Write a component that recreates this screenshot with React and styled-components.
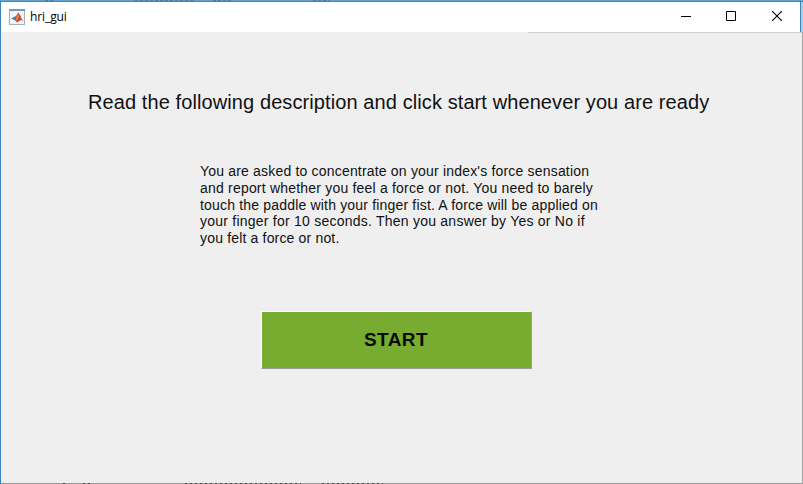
import React from "react";
import styled, { createGlobalStyle } from "styled-components";

const Global = createGlobalStyle`
  * { box-sizing: border-box; }
  html, body { margin: 0; background: #efefef; overflow: hidden; }
`;

const Window = styled.main`
  display: flex;
  flex-direction: column;
  width: 803px;
  height: 484px;
  background: #efefef;
  border-left: 1px solid #3c83bd;
  font-family: "Liberation Sans", Arial, sans-serif;
  color: #111;
`;

const TopEdge = styled.div`
  height: 2px;
  flex: none;
  margin-left: -1px;
  background: linear-gradient(#62a3d4 50%, #4583b4 50%);
`;

const TitleBar = styled.header`
  display: flex;
  align-items: center;
  flex: none;
  height: 30px;
  margin-right: 2px;
  padding-left: 8px;
  background: #fff;
  border-right: 1px solid #3f83b5;
  box-shadow: 2px 0 #a9cbe5;
`;

const Title = styled.h1`
  flex: 1;
  margin: 0 0 0 5px;
  font: 400 12px/16px "Open Sans", "Noto Sans", sans-serif;
  letter-spacing: -0.1px;
  color: #000;
`;

const Controls = styled.div`
  display: flex;
  height: 28px;
  margin-bottom: 2px;
`;

const ControlButton = styled.button`
  display: flex;
  align-items: center;
  justify-content: center;
  width: ${(p) => p.$width}px;
  padding: 0;
  border: 0;
  background: transparent;
`;

const Panel = styled.section`
  display: flex;
  flex-direction: column;
  flex: 1;
  min-height: 0;
  border-right: 1px solid #a5a5a5;
`;

const PanelEdge = styled.div`
  flex: none;
  height: 1px;
  margin-left: 527px;
  background: #cfcfcf;
`;

const Heading = styled.h2`
  margin: 57px 0 0 87px;
  font-size: 20px;
  font-weight: 400;
  line-height: 24px;
  letter-spacing: 0.095px;
  white-space: nowrap;
`;

const Description = styled.p`
  margin: 49px 0 0 199px;
  font-size: 14px;
  line-height: 16.8px;
`;

const Line = styled.span`
  display: block;
  white-space: nowrap;
  letter-spacing: ${(p) => p.$spacing}px;
`;

const StartButton = styled.button`
  width: 271px;
  height: 58px;
  margin: 64px 0 0 260px;
  padding: 0 1px 0 0;
  border: 1px solid;
  border-color: #fff #999d94 #999d94 #fff;
  border-radius: 0;
  background: #77ac30;
  color: #080c04;
  font: 700 19px/22px "Liberation Sans", Arial, sans-serif;
  letter-spacing: 0.4px;
`;

const BottomEdge = styled.footer`
  display: flex;
  height: 1px;
  margin-top: auto;
  background: #999;
`;

const lines = [
  ["You are asked to concentrate on your index's force sensation", 0.185],
  ["and report whether you feel a force or not. You need to barely", 0.2],
  ["touch the paddle with your finger fist. A force will be applied on", 0.18],
  ["your finger for 10 seconds. Then you answer by Yes or No if", 0.235],
  ["you felt a force or not.", 0.17],
];

const AppIcon = () => (
  <svg width="16" height="16" viewBox="0 0 16 16">
    <rect x=".5" y=".5" width="15" height="15" fill="#f2f4f6" stroke="#a5afba" />
    <path d="M0 0h16v2H0z" fill="#7598b8" />
    <path d="M2 9.5 5 8l2-1 2-3-2.5 7.5-1.8-.8z" fill="#487eaa" />
    <path d="M9.4 3.3C11 5 11.8 9 14 12l-2.2-1L8 13.5 6 11l1.5-4z" fill="#c9452b" />
    <path d="M9.2 4 10 8l-2.4 4-1-1.4z" fill="#e58a42" />
  </svg>
);

export default function App() {
  return (
    <>
      <Global />
      <Window>
        <TopEdge>
          <svg width="803" height="2" display="block">
            <path d="M45 .5h8M135 .5h60M213 .5h18M313 .5h16" stroke="#4a7faa" strokeDasharray="3 2" />
          </svg>
        </TopEdge>
        <TitleBar>
          <AppIcon />
          <Title>hri_gui</Title>
          <Controls>
            <ControlButton $width={45} aria-label="Minimize">
              <svg width="10" height="10"><path d="M0 5.5h10" stroke="#000" /></svg>
            </ControlButton>
            <ControlButton $width={45} aria-label="Maximize">
              <svg width="10" height="10"><path d="M.5.5h9v9h-9z" fill="none" stroke="#000" /></svg>
            </ControlButton>
            <ControlButton $width={47} aria-label="Close">
              <svg width="10" height="10"><path d="m0 0 10 10M10 0 0 10" stroke="#000" strokeWidth="1.1" /></svg>
            </ControlButton>
          </Controls>
        </TitleBar>
        <Panel>
          <PanelEdge />
          <Heading>Read the following description and click start whenever you are ready</Heading>
          <Description>
            {lines.map(([text, spacing]) => (
              <Line key={text} $spacing={spacing}>{text}</Line>
            ))}
          </Description>
          <StartButton>START</StartButton>
          <BottomEdge>
            <svg width="400" height="1">
              <path d="M62 .5h5M82 .5h8M184 .5h116M321 .5h61" stroke="#444" strokeDasharray="2 3" />
            </svg>
          </BottomEdge>
        </Panel>
      </Window>
    </>
  );
}
